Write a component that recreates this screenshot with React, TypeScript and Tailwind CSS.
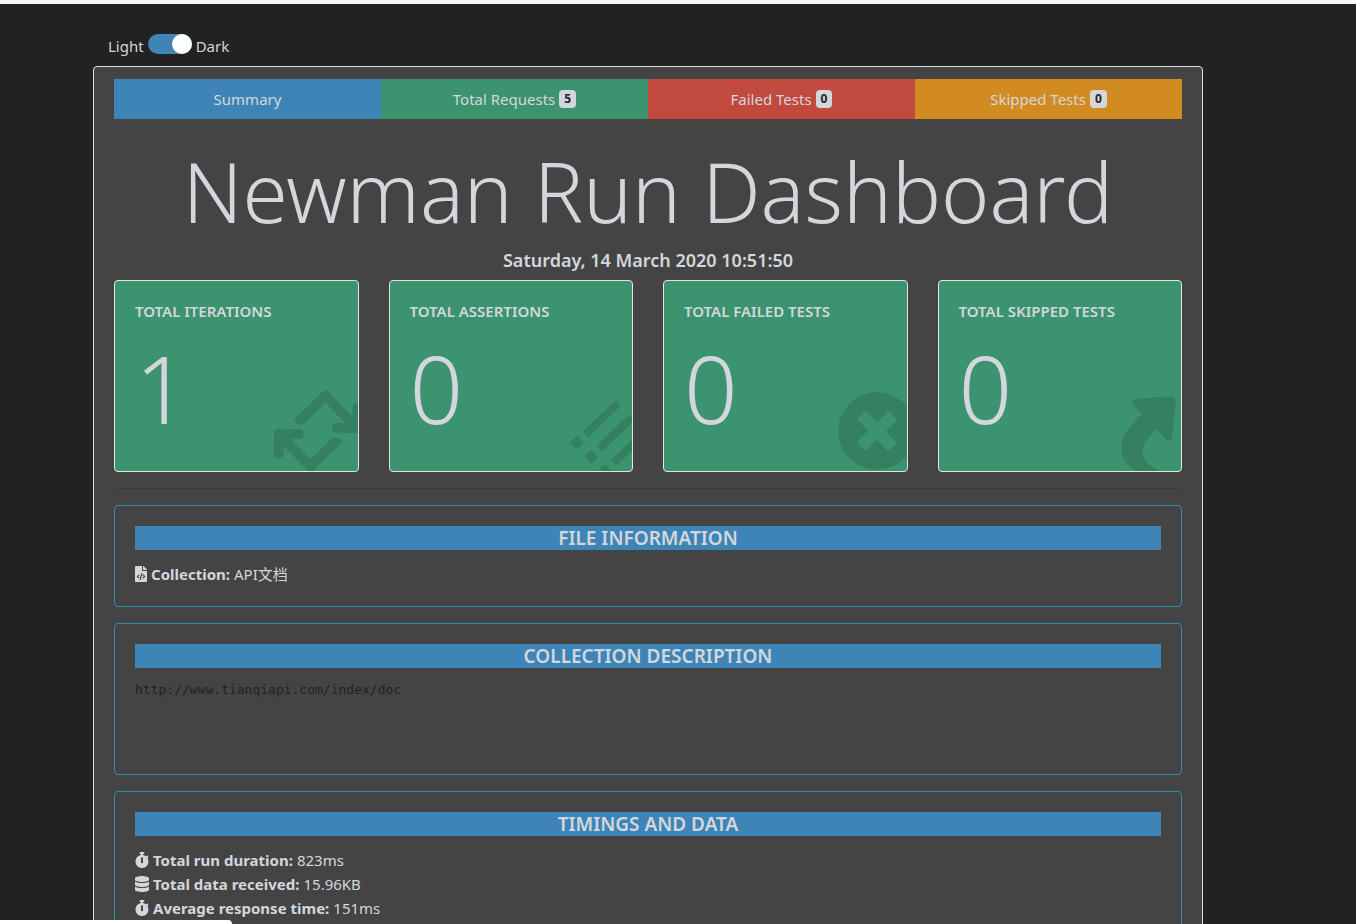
import React, { useState } from 'react';
import { FaDatabase, FaFileCode, FaPlusCircle, FaRetweet, FaShare, FaStopwatch } from 'react-icons/fa';

type Icon = React.ComponentType<{ className?: string }>;

interface Tab {
  label: string;
  count?: number;
  color: string;
}

interface Stat {
  label: string;
  value: number;
  icon: Icon;
  iconWidth: string;
}

interface Info {
  label: string;
  value: string;
  icon: Icon;
  iconWidth: string;
}

const ListIcon: Icon = ({ className }) => (
  <svg viewBox="0 0 80 80" fill="currentColor" className={className}>
    {[31, 51, 71].map((y) => (
      <g key={y}>
        <rect x="9" y={y - 5} width="10" height="10" rx="1" />
        <rect x="26" y={y - 4} width="45" height="8" rx="1" />
      </g>
    ))}
  </svg>
);

const tabs: Tab[] = [
  { label: 'Summary', color: 'bg-[#3f84b6]' },
  { label: 'Total Requests', count: 5, color: 'bg-[#3c9370]' },
  { label: 'Failed Tests', count: 0, color: 'bg-[#c2493e]' },
  { label: 'Skipped Tests', count: 0, color: 'bg-[#d18b21]' },
];

const stats: Stat[] = [
  { label: 'Total Iterations', value: 1, icon: FaRetweet, iconWidth: 'w-[100px]' },
  { label: 'Total Assertions', value: 0, icon: ListIcon, iconWidth: 'w-20' },
  { label: 'Total Failed Tests', value: 0, icon: FaPlusCircle, iconWidth: 'w-20' },
  { label: 'Total Skipped Tests', value: 0, icon: FaShare, iconWidth: 'w-20' },
];

const timings: Info[] = [
  { label: 'Total run duration:', value: '823ms', icon: FaStopwatch, iconWidth: 'w-3.5' },
  { label: 'Total data received:', value: '15.96KB', icon: FaDatabase, iconWidth: 'w-3.5' },
  { label: 'Average response time:', value: '151ms', icon: FaStopwatch, iconWidth: 'w-3.5' },
];

const ThemeSwitch: React.FC = () => {
  const [dark, setDark] = useState(true);
  return (
    <label className="flex items-center gap-1 pl-[15px] h-6">
      <span>Light</span>
      <input
        type="checkbox"
        aria-label="Dark theme"
        className="peer sr-only"
        checked={dark}
        onChange={(e) => setDark(e.target.checked)}
      />
      <span className="flex w-11 h-5 mb-1 rounded-full bg-[#999] peer-checked:bg-[#3f84b6] peer-checked:justify-end">
        <span className="size-5 rounded-full bg-white" />
      </span>
      <span>Dark</span>
    </label>
  );
};

const StatCard: React.FC<Stat> = ({ label, value, icon: Icon, iconWidth }) => (
  <div className="relative overflow-hidden rounded border border-[#dfe5e2] bg-[#3c9370] p-5 h-48">
    <h6 className="text-[15px] leading-5 font-semibold uppercase whitespace-nowrap">{label}</h6>
    <p className="mt-2.5 text-[94px] leading-[115px] font-light">{value}</p>
    <Icon className={`absolute -right-2.5 bottom-0 h-20 -rotate-[44deg] text-[#141414]/15 ${iconWidth}`} />
  </div>
);

const Panel: React.FC<{ title: string; children: React.ReactNode }> = ({ title, children }) => (
  <section className="mb-4 rounded border border-[#2f8fa8] p-5">
    <h5 className="mb-3 bg-[#3f84b6] text-center text-[19px] leading-6 font-semibold uppercase">{title}</h5>
    {children}
  </section>
);

const InfoRow: React.FC<Info> = ({ label, value, icon: Icon, iconWidth }) => (
  <div className="flex items-center gap-1 h-6">
    <Icon className={`h-4 shrink-0 ${iconWidth}`} />
    <strong className="font-bold">{label}</strong>
    <span>{value}</span>
  </div>
);

export default function App() {
  return (
    <div className="h-screen overflow-hidden border-t-4 border-[#f5f8f6] bg-[#222] pr-[60px] pt-[30px] text-[15px] leading-6 text-[#d3d7dc] font-['Noto_Sans','Noto_Sans_CJK_SC',sans-serif]">
      <div className="mx-auto max-w-[1110px]">
        <ThemeSwitch />
        <main className="mt-2 rounded border border-[#dfe1e3] bg-[#444] px-5 py-3">
          <nav className="grid grid-cols-4">
            {tabs.map((tab) => (
              <a key={tab.label} href="#" className={`flex h-10 items-center justify-center gap-1 ${tab.color}`}>
                <span>{tab.label}</span>
                {tab.count !== undefined && (
                  <span className="rounded bg-[#d3d7dc] px-[5px] text-xs leading-[18px] font-bold text-[#222]">
                    {tab.count}
                  </span>
                )}
              </a>
            ))}
          </nav>

          <h1 className="mt-6 text-center text-[82px] leading-[97px] font-light whitespace-nowrap">
            Newman Run Dashboard
          </h1>
          <h5 className="my-2 text-center text-lg leading-6 font-semibold">Saturday, 14 March 2020 10:51:50</h5>

          <div className="grid grid-cols-4 gap-[30px]">
            {stats.map((stat) => (
              <StatCard key={stat.label} {...stat} />
            ))}
          </div>

          <hr className="my-4 border-[#3c3c3c]" />

          <Panel title="File Information">
            <InfoRow icon={FaFileCode} iconWidth="w-3" label="Collection:" value="API文档" />
          </Panel>

          <Panel title="Collection Description">
            <pre className="h-[74px] text-[13px] leading-5 text-[#222] font-['DejaVu_Sans_Mono',monospace]">
              http://www.tianqiapi.com/index/doc
            </pre>
          </Panel>

          <Panel title="Timings and Data">
            {timings.map((row) => (
              <InfoRow key={row.label} {...row} />
            ))}
          </Panel>
        </main>
      </div>
      <div className="fixed bottom-0 left-0 h-1 w-[232px] rounded-tr bg-white" />
    </div>
  );
}
